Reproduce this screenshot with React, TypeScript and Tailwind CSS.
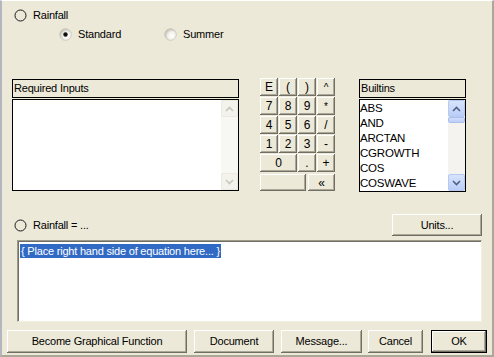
import React from "react";

const font = { fontFamily: '"Liberation Sans", Arial, sans-serif' };

const btn =
  "bg-[#ece9d8] shadow-[inset_-1px_-1px_#716f64,inset_1px_1px_#ffffff,inset_-2px_-2px_#aca899] flex items-center justify-center text-black";

function Radio({ kind, checked, id }: { kind: "plain" | "xp"; checked?: boolean; id?: string }) {
  if (kind === "plain") {
    return (
      <svg width="13" height="13" viewBox="0 0 13 13" className="shrink-0">
        <circle cx="6.5" cy="6.5" r="5.5" fill="none" stroke="#1a1a1a" strokeWidth="1" />
      </svg>
    );
  }
  return (
    <svg width="13" height="13" viewBox="0 0 13 13" className="shrink-0">
      <defs>
        <radialGradient id={id} cx="0.62" cy="0.62" r="0.68">
          <stop offset="0" stopColor="#ffffff" />
          <stop offset="0.5" stopColor="#f2f1eb" />
          <stop offset="1" stopColor="#b9b7aa" />
        </radialGradient>
      </defs>
      <circle cx="6.5" cy="6.5" r="5.8" fill={`url(#${id})`} stroke="#c4c2b6" strokeWidth="0.7" />
      {checked && <circle cx="6.5" cy="6.5" r="2.2" fill="#111" />}
    </svg>
  );
}

function Arrow({ dir, color }: { dir: "up" | "down"; color: string }) {
  return (
    <svg width="9" height="6" viewBox="0 0 9 6">
      {dir === "up" ? (
        <path d="M1 5 L4.5 1.5 L8 5" fill="none" stroke={color} strokeWidth="1.6" />
      ) : (
        <path d="M1 1 L4.5 4.5 L8 1" fill="none" stroke={color} strokeWidth="1.6" />
      )}
    </svg>
  );
}

const keys: string[][] = [
  ["E", "(", ")", "^"],
  ["7", "8", "9", "*"],
  ["4", "5", "6", "/"],
  ["1", "2", "3", "-"],
];

const builtins = ["ABS", "AND", "ARCTAN", "CGROWTH", "COS", "COSWAVE"];

export default function App() {
  return (
    <div
      style={font}
      className="w-[494px] h-[357px] box-border overflow-hidden bg-[#ece9d8] border-t border-t-white border-l-2 border-l-[#b4b6bf] border-r-2 border-r-[#aca899] border-b-2 border-b-[#aca899] text-[11px] tracking-[-0.2px] text-black flex flex-col"
    >
      {/* Rainfall radio */}
      <div className="mt-[8px] ml-[12px] h-[13px] flex items-center gap-[6px]">
        <Radio kind="plain" />
        <span className="leading-[13px]">Rainfall</span>
      </div>

      {/* Standard / Summer */}
      <div className="mt-[6px] ml-[57px] h-[13px] flex items-center">
        <div className="flex items-center gap-[6px] w-[105px]">
          <Radio kind="xp" checked id="rg1" />
          <span className="leading-[13px]">Standard</span>
        </div>
        <div className="flex items-center gap-[6px]">
          <Radio kind="xp" id="rg2" />
          <span className="leading-[13px]">Summer</span>
        </div>
      </div>

      {/* Middle section */}
      <div className="mt-[37px] flex h-[114px]">
        {/* Required inputs */}
        <div className="ml-[10px] mt-[1px] w-[227px] flex flex-col gap-[1px]">
          <div className="h-[19px] border border-black px-[1px] flex items-center leading-[13px]">
            Required Inputs
          </div>
          <div className="h-[92px] border border-black bg-white flex justify-end">
            <div className="w-[17px] h-full bg-[#f7f7f3] flex flex-col justify-between">
              <div className="h-[17px] bg-[#f3f2ec] border border-[#ebe9e0] rounded-[2px] flex items-center justify-center">
                <Arrow dir="up" color="#c9c7bd" />
              </div>
              <div className="h-[17px] bg-[#f3f2ec] border border-[#ebe9e0] rounded-[2px] flex items-center justify-center">
                <Arrow dir="down" color="#c9c7bd" />
              </div>
            </div>
          </div>
        </div>

        {/* Keypad */}
        <div className="ml-[21px] w-[75px] flex flex-col gap-[1px] text-[12px] tracking-normal">
          {keys.map((row, i) => (
            <div key={i} className="grid grid-cols-4 gap-[1px]">
              {row.map((k) => (
                <div key={k} className={`${btn} h-[18px]`}>
                  <span className={k === "*" || k === "^" ? "text-[10px]" : ""}>{k}</span>
                </div>
              ))}
            </div>
          ))}
          <div className="grid grid-cols-4 gap-[1px]">
            <div className={`${btn} h-[18px] col-span-2`}>0</div>
            <div className={`${btn} h-[18px]`}>.</div>
            <div className={`${btn} h-[18px]`}>+</div>
          </div>
          <div className="flex gap-[2px] mt-[1px]">
            <div className={`${btn} h-[17px] w-[46px]`}></div>
            <div className={`${btn} h-[17px] w-[27px]`}>«</div>
          </div>
        </div>

        {/* Builtins */}
        <div className="ml-[24px] mt-[1px] w-[107px] flex flex-col gap-[1px]">
          <div className="h-[19px] border border-black px-[1px] flex items-center leading-[13px]">
            Builtins
          </div>
          <div className="h-[93px] border border-black bg-white flex">
            <div className="flex-1 flex flex-col pt-[1px] text-[11.5px]">
              {builtins.map((b) => (
                <div key={b} className="h-[15px] leading-[15px]">
                  {b}
                </div>
              ))}
            </div>
            <div className="w-[17px] h-full bg-[#f4f3ef] flex flex-col">
              <div className="h-[17px] bg-gradient-to-b from-[#d8e4fc] to-[#b9cdf7] border border-[#b6c9f1] rounded-[2px] flex items-center justify-center">
                <Arrow dir="up" color="#4d6185" />
              </div>
              <div className="h-[6px] bg-gradient-to-b from-[#d2defb] to-[#bccff7] border border-[#a9bfee] rounded-[2px]"></div>
              <div className="flex-1"></div>
              <div className="h-[17px] bg-gradient-to-b from-[#d8e4fc] to-[#b9cdf7] border border-[#b6c9f1] rounded-[2px] flex items-center justify-center">
                <Arrow dir="down" color="#4d6185" />
              </div>
            </div>
          </div>
        </div>
      </div>

      {/* Rainfall = ... and Units */}
      <div className="mt-[22px] h-[22px] flex items-center justify-between">
        <div className="ml-[12px] flex items-center gap-[6px]">
          <Radio kind="plain" />
          <span className="leading-[13px]">Rainfall = ...</span>
        </div>
        <div className={`${btn} mr-[10px] w-[90px] h-[22px]`}>Units...</div>
      </div>

      {/* Equation */}
      <div className="mt-[4px] ml-[15px] w-[465px] h-[82px] bg-white border border-t-[#9d9a8c] border-l-[#9d9a8c] border-b-[#f1efe2] border-r-[#f1efe2] shadow-[inset_1px_1px_#716f64] pt-[2px] pl-[2px]">
        <span className="bg-[#316ac5] text-white leading-[14px] inline-block px-[1px]">
          {"{ Place right hand side of equation here... }"}
        </span>
      </div>

      {/* Bottom buttons */}
      <div className="mt-[8px] ml-[5px] flex h-[23px]">
        <div className={`${btn} w-[180px] h-[23px]`}>Become Graphical Function</div>
        <div className={`${btn} ml-[7px] w-[80px] h-[23px]`}>Document</div>
        <div className={`${btn} ml-[7px] w-[81px] h-[23px]`}>Message...</div>
        <div className={`${btn} ml-[6px] w-[55px] h-[23px]`}>Cancel</div>
        <div className="ml-[8px] w-[56px] h-[23px] border border-black">
          <div className={`${btn} w-full h-full`}>OK</div>
        </div>
      </div>
    </div>
  );
}
